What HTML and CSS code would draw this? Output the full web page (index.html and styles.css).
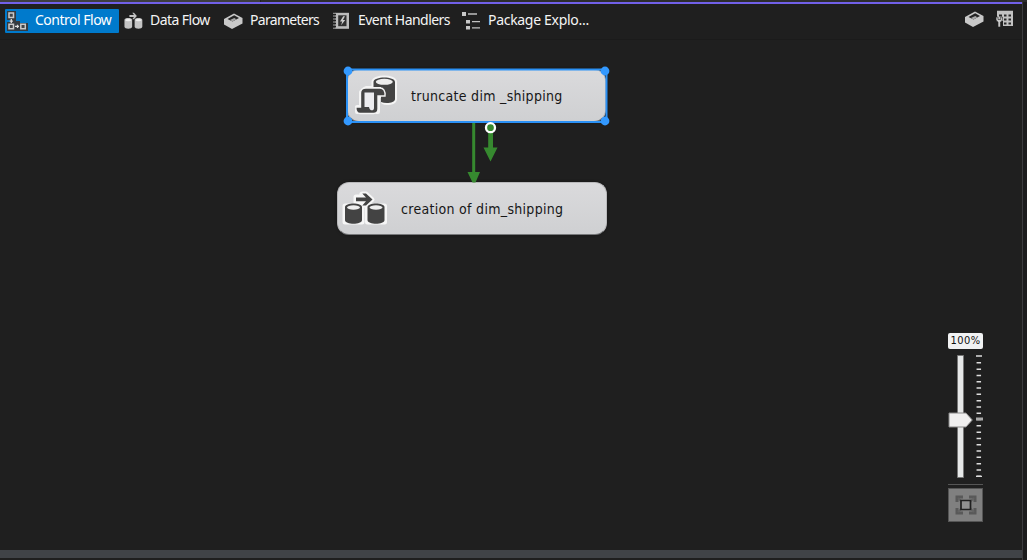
FILE: index.html
```html
<!DOCTYPE html>
<html lang="en">
<head>
<meta charset="utf-8">
<title>Control Flow</title>
<link rel="stylesheet" href="styles.css">
</head>
<body>
<svg class="defs" width="0" height="0" aria-hidden="true">
  <symbol id="box" viewBox="0 0 19 18">
    <path d="M0 7 10 1.5 18.5 6V11.5L8 17 0 12.5Z" fill="#c9c9c9"/>
    <path d="M3.5 7 10.2 3.2 15 6 8.5 9.6Z" fill="#252525"/>
    <path d="M6 8.1 10.3 5.9 12.3 7.3 8.5 9.4Z" fill="#a9a9a9"/>
  </symbol>
  <symbol id="flow" viewBox="0 0 42 34" preserveAspectRatio="none">
    <path d="M12 5.5H22L18.3 1.5H22L28.5 7.5 22 13.5H18.3L22 9.3H12Z" fill="currentColor"/>
    <path d="M1 15C1 10.2 18 10.2 18 15V28C18 33 1 33 1 28Z" fill="currentColor"/>
    <path d="M23.5 15C23.5 10.2 40.5 10.2 40.5 15V28C40.5 33 23.5 33 23.5 28Z" fill="currentColor"/>
    <ellipse cx="9.5" cy="15.5" rx="6.5" ry="2.2" class="lid"/>
    <ellipse cx="32" cy="15.5" rx="6.5" ry="2.2" class="lid"/>
  </symbol>
</svg>
<div class="window">
  <div class="strip"><i></i></div>
  <div class="accent"></div>
  <header class="toolbar">
    <nav class="tabs">
      <div class="tab control active">
        <svg class="icon" width="21" height="20" viewBox="0 0 21 20">
          <g fill="#353b40"><path d="M0 0H9V10H13V12H21V20H0V11H3V9H0Z"/></g>
          <g fill="#404448" stroke="#c9c9c9" stroke-width="1.5"><path d="M2 2H6.5V6.5H2ZM2 13.2H6.5V17.7H2ZM13.8 13.2H18.3V17.7H13.8Z"/></g>
          <path d="M4.3 8V12M2.7 10.2H5.9M8 15.4H12M10.5 13.7V17.1" stroke="#ddd" stroke-width="1.3"/>
        </svg>
        <span>Control Flow</span>
      </div>
      <div class="tab data">
        <svg class="icon small-flow" width="19" height="18"><use href="#flow" width="19" height="18"/></svg>
        <span>Data Flow</span>
      </div>
      <div class="tab params">
        <svg class="icon" width="19" height="18"><use href="#box"/></svg>
        <span>Parameters</span>
      </div>
      <div class="tab events">
        <svg class="icon" width="17" height="18" viewBox="0 0 17 18">
          <path d="M2.5 .8H16V16.8H2.5Z" fill="#bcbcbc"/>
          <path d="M5.2 3.3H13.5V14.2H5.2Z" fill="#303030"/>
          <path d="M10.2 4.2 7 9.5H9.2L8.1 13.2 12.2 8H9.9L12 4.2Z" fill="#ccc"/>
          <path d="M0 2.5H3M0 5.5H3M0 8.5H3M0 11.5H3M0 14.5H3" stroke="#1f1f1f" stroke-width="1.4"/>
          <path d="M0 1.3H3M0 4H3M0 7H3M0 10H3M0 13H3M0 16.2H3" stroke="#a5a5a5"/>
        </svg>
        <span>Event Handlers</span>
      </div>
      <div class="tab explorer">
        <svg class="icon" width="20" height="20" viewBox="0 0 20 20">
          <path d="M0 1H4V5H0ZM4 9H8V12.5H4ZM4 15H8V18.5H4Z" fill="#c8c8c8"/>
          <path d="M6 3H15" stroke="#969696" stroke-width="2"/>
          <path d="M10 10.7H18M10 16.8H18" stroke="#c0c0c0" stroke-width="1.3"/>
        </svg>
        <span>Package Explo...</span>
      </div>
    </nav>
    <div class="tools">
      <svg width="19" height="18"><use href="#box"/></svg>
      <svg width="19" height="18" viewBox="0 0 19 18">
        <path d="M2 .8H18V16H8V11H2Z" fill="#c2c2c2"/>
        <path d="M4 4.5H7V6.5H4ZM9 4.5H11.5V6.5H9ZM13.5 4.5H16V6.5H13.5ZM9 8.5H11.5V10.5H9ZM13.5 8.5H16V10.5H13.5ZM9 12.5H11.5V14.5H9ZM13.5 12.5H16V14.5H13.5Z" fill="#282828"/>
        <path d="M1 7V9.5Q1 11.3 3 12V17H5.5V12Q7.5 11.3 7.5 9.5V7L5.7 7V9.5H3V7Z" fill="#c8c8c8" stroke="#222" stroke-width=".6"/>
      </svg>
    </div>
  </header>
  <main class="canvas">
    <section class="node truncate">
      <svg class="node-icon" width="44" height="42" viewBox="0 0 44 42">
        <g fill="#f4f4f4" stroke="#f4f4f4" stroke-width="4" stroke-linejoin="round">
          <path d="M18.5 7C18.5 1 40 1 40 7V24C40 28 31 29 28 27V19L18.5 12Z"/>
          <path d="M11 13H25L30 21H23V37H2V32H6V17Z"/>
        </g>
        <path d="M18.5 7C18.5 1 40 1 40 7V24C40 28 31 29 26 27V12H18.5Z" fill="#434343"/>
        <ellipse cx="29.3" cy="6.8" rx="8.5" ry="3" fill="#ededed"/>
        <path d="M11 13H25C28.5 13 30.5 16 30 21H23V34C23 37 21.5 38.5 18.5 38.5H5C2 38.5 .8 36 .8 32H5.5V18C5.5 15 7.5 13 11 13Z" fill="#434343" stroke="#f4f4f4" stroke-width="1.4"/>
        <path d="M9.5 17.5H19V33C19 36.3 14.5 36.3 14 32H9.5Z" fill="#ececef"/>
      </svg>
      <span>truncate dim _shipping</span>
    </section>
    <section class="node creation">
      <svg class="node-icon" width="46" height="38" viewBox="-2 -2 46 38">
        <g fill="#f6f6f6" stroke="#f6f6f6" stroke-width="5" stroke-linejoin="round"><path d="M12 5H20L18 2H22L28 7.5 22 13H18L20 10H12ZM1 14H18V30H1ZM23.5 14H40.5V30H23.5Z"/></g>
        <use href="#flow" width="42" height="34"/>
      </svg>
      <span>creation of dim_shipping</span>
    </section>
    <svg class="links" width="280" height="130" viewBox="337 60 280 130">
      <rect x="347" y="69.5" width="259.5" height="52.5" fill="none" stroke="#2b91f5" stroke-width="2"/>
      <g fill="#36892f"><path d="M472.2 123H475.2V172H480L475.5 182.5H472.5L467.5 172H472.2ZM488.2 128H493V147.5H497.5L490.5 161.5 483.5 147.5H488.2Z"/></g>
      <circle cx="490.5" cy="127.7" r="4.5" fill="#36892f" stroke="#fff" stroke-width="2.3"/>
      <g fill="#3399ff"><circle cx="348" cy="71" r="4.4"/><circle cx="605" cy="71" r="4.4"/><circle cx="348" cy="121" r="4.4"/><circle cx="605" cy="121" r="4.4"/></g>
    </svg>
    <aside class="zoom">
      <div class="percent">100%</div>
      <svg class="slider" width="35" height="130" viewBox="948 352 35 130">
        <path d="M957.5 355.5H963.5V477.5H957.5Z" fill="#e6e8e8" stroke="#777"/>
        <path d="M978.8 357.5V476" stroke="#dedede" stroke-width="4.5" stroke-dasharray="0 4.6 1.5 .2"/>
        <path d="M976 419H983" stroke="#aaa" stroke-width="3"/>
        <path d="M976 356H982M976 476.3H982" stroke="#ddd" stroke-width="1.3"/>
        <path d="M949 413H966L972.3 420 966 427H949Z" fill="#f0f0f0" stroke="#888"/>
      </svg>
      <hr>
      <button aria-label="Fit to window"><svg width="22" height="20" viewBox="0 0 22 20">
        <path d="M2 7V2H8M14 2H20V7M20 13V18H14M8 18H2V13" fill="none" stroke="#595959" stroke-width="3"/>
        <path d="M3 3 7 7M19 3 15 7M19 17 15 13M3 17 7 13" stroke="#636363" stroke-width="2"/>
        <path d="M6 5.5H15.5V14.5H6Z" fill="#919191" stroke="#202020" stroke-width="1.7"/>
      </svg></button>
    </aside>
  </main>
  <footer></footer>
</div>
</body>
</html>
```
FILE: styles.css
```css
* { box-sizing: border-box; }
body { margin: 0; background: #1f1f1f; font-family: "Noto Sans", "Open Sans", sans-serif; }
.defs { position: absolute; }
.window { width: 1027px; height: 560px; display: flex; flex-direction: column; overflow: hidden; background: linear-gradient(90deg, transparent 1022px, #3c3c3f 1022px, #3c3c3f 1023px, #1c1c1d 1023px); }
.strip { height: 2px; background: #2c2c2e; flex: none; }
.strip i { display: block; width: 261px; height: 2px; background: #3d3d40; border-right: 1px solid #1f1f1f; }
.accent { width: 1022px; height: 2px; background: #7160e8; flex: none; }
.toolbar { height: 36px; width: 1022px; flex: none; display: flex; justify-content: space-between; padding: 5px 8px 0 5px; border-bottom: 1px solid #1b1b1b; }
.tabs { display: flex; }
.tab { height: 24px; display: flex; align-items: center; color: #f4f4f4; font-size: 14px; line-height: 22px; white-space: nowrap; }
.tab span { position: relative; top: -1px; }
.icon { flex: none; }
.active { background: #007acc; color: #fff; border-radius: 1px; }
.control { width: 114px; padding-left: 2px; gap: 7px; letter-spacing: -.5px; }
.data { width: 100px; padding-left: 5px; gap: 7px; letter-spacing: -.55px; }
.params { width: 114px; padding-left: 5px; gap: 7px; letter-spacing: -.7px; }
.events { width: 124px; gap: 8px; letter-spacing: -.55px; }
.explorer { padding-left: 5px; gap: 6px; letter-spacing: -.3px; }
.small-flow { color: #c4c4c4; }
.small-flow .lid { fill: #666; }
.tools { display: flex; gap: 11px; padding: 1px 0 0; }
.lid { fill: #eee; }
.canvas { height: 510px; position: relative; flex: none; }
.node { position: absolute; height: 53px; display: flex; align-items: center; border-radius: 12px; border: 1px solid #b9b9bb; border-bottom-color: #77787a; background: linear-gradient(#dadadc, #cfd0d2); color: #171717; font-family: "DejaVu Sans Condensed", "DejaVu Sans", sans-serif; font-stretch: condensed; font-size: 14px; letter-spacing: .3px; white-space: nowrap; box-shadow: 0 0 3px #141414; }
.truncate { left: 347px; top: 29px; width: 259px; padding-left: 7px; }
.creation { left: 337px; top: 142px; width: 270px; padding-left: 4px; }
.node-icon { flex: none; color: #434343; }
.truncate span { margin-left: 12px; }
.creation span { margin-left: 13px; }
.links { position: absolute; left: 337px; top: 20px; }
.zoom { position: absolute; left: 948px; top: 293px; width: 35px; display: flex; flex-direction: column; }
.percent { height: 16px; border-radius: 2px; background: #f1f2f3; color: #111; font-family: "DejaVu Sans Condensed", "DejaVu Sans", sans-serif; font-stretch: condensed; font-size: 11px; letter-spacing: .4px; line-height: 15px; text-align: center; }
.slider { margin-top: 3px; }
.zoom hr { width: 35px; height: 1px; border: 0; margin: 2px 0 3px; background: #555; }
.zoom button { width: 35px; height: 34px; padding: 0; border: 1px solid #555; background: #808080; display: flex; align-items: center; justify-content: center; }
footer { width: 1022px; height: 8px; background: #404347; }
```
